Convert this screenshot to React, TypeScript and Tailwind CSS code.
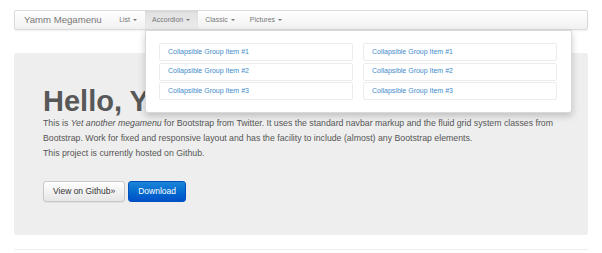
function Caret() {
  return (
    <span className="ml-[3px] inline-block h-0 w-0 border-x-[2px] border-t-[2px] border-x-transparent border-t-[#777]" />
  );
}

function NavItem({ label, active }: { label: string; active?: boolean }) {
  return (
    <div
      className={
        "flex items-center px-[7.5px] text-[7px] text-[#777] " +
        (active ? "bg-gradient-to-b from-[#e2e2e2] to-[#ebebeb] shadow-[inset_0_1px_2px_rgba(0,0,0,0.06)]" : "")
      }
    >
      {label}
      <Caret />
    </div>
  );
}

function Item({ n }: { n: number }) {
  return (
    <div className="flex h-[18px] items-center rounded-[2px] border border-[#ececec] pl-[8px] text-[7px] text-[#428bca]">
      Collapsible Group Item #{n}
    </div>
  );
}

function App() {
  return (
    <div className="h-[253px] w-[602px] overflow-hidden bg-white font-['Liberation_Sans',Arial,sans-serif]">
      <div className="px-[14px] pt-[10px]">
        <nav className="relative z-10 flex h-[20px] rounded-[2px] border border-[#dadada] bg-gradient-to-b from-white to-[#f1f1f1] shadow-[0_1px_2px_rgba(0,0,0,0.06)]">
          <div className="flex items-center pl-[9px] pr-[10px] text-[9.6px] text-[#777]">Yamm Megamenu</div>
          <NavItem label="List" />
          <NavItem label="Accordion" active />
          <NavItem label="Classic" />
          <NavItem label="Pictures" />

          <div className="absolute left-[130px] top-[19px] flex h-[83px] w-[427px] gap-[10px] rounded-b-[3px] border border-[rgba(0,0,0,0.15)] bg-white pl-[13px] pr-[14px] pt-[12px] shadow-[0_3px_7px_rgba(0,0,0,0.2)]">
            <div className="flex flex-1 flex-col gap-[1.5px]">
              <Item n={1} />
              <Item n={2} />
              <Item n={3} />
            </div>
            <div className="flex flex-1 flex-col gap-[1.5px]">
              <Item n={1} />
              <Item n={2} />
              <Item n={3} />
            </div>
          </div>
        </nav>

        <div className="mt-[23px] h-[182px] rounded-[3px] bg-[#eeeeee] pl-[29px] pt-[33px]">
          <h1 className="text-[29px] font-bold leading-[30px] text-[#585858]">Hello, Yamm!</h1>
          <p className="whitespace-nowrap text-[8.75px] leading-[15px] text-[#555]">
            This is <em>Yet another megamenu</em> for Bootstrap from Twitter. It uses the standard navbar markup and the
            fluid grid system classes from
            <br />
            Bootstrap. Work for fixed and responsive layout and has the facility to include (almost) any Bootstrap
            elements.
            <br />
            This project is currently hosted on Github.
          </p>
          <div className="mt-[20px] flex gap-[3px]">
            <button className="h-[21px] rounded-[3px] border border-[#c8c8c8] bg-gradient-to-b from-white to-[#e6e6e6] px-[9px] text-[8.5px] text-[#333] shadow-[0_1px_1px_rgba(0,0,0,0.05)]">
              View on Github»
            </button>
            <button className="h-[21px] rounded-[3px] border border-[#0050c0] bg-gradient-to-b from-[#1a85d6] to-[#0050c8] px-[9px] text-[8.5px] text-white">
              Download
            </button>
          </div>
        </div>

        <div className="mt-[14px] border-t border-[#eeeeee]" />
      </div>
    </div>
  );
}

export default App;
